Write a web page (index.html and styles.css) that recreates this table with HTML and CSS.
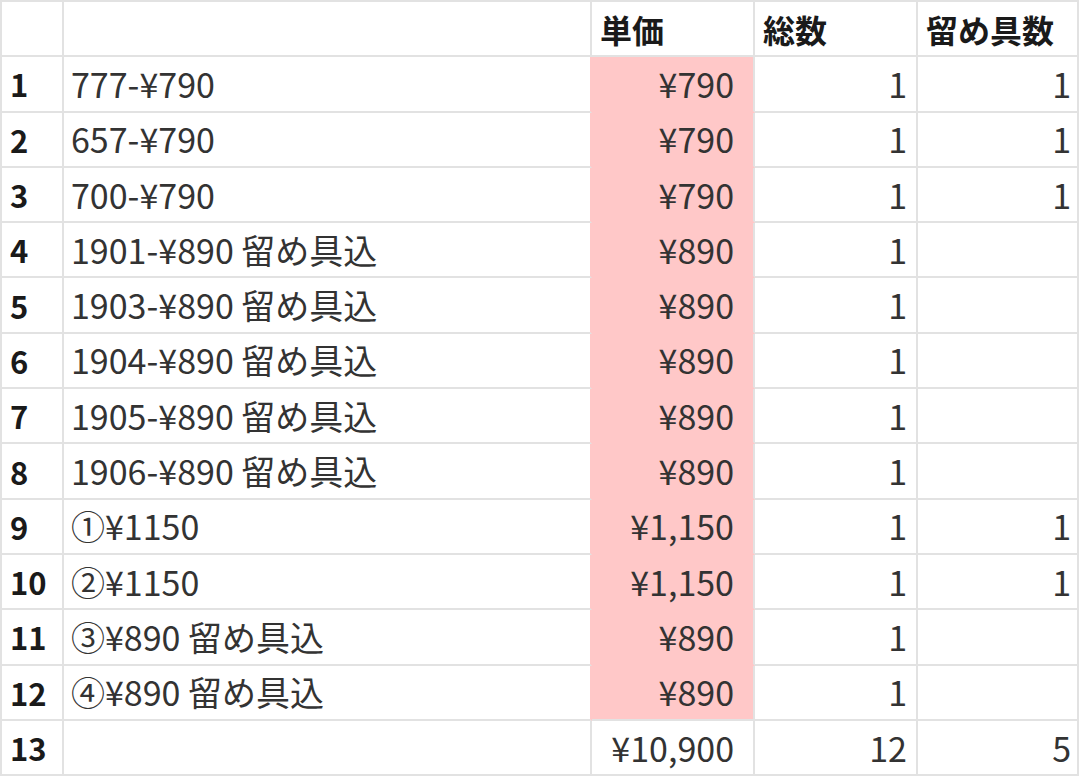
FILE: index.html
```html
<!DOCTYPE html>
<html lang="ja">
<head>
<meta charset="utf-8">
<title>留め具数</title>
<link rel="stylesheet" href="styles.css">
</head>
<body>
<div class="sheet">
  <div class="cell rn"></div><div class="cell txt"></div><div class="cell hd">単価</div><div class="cell hd">総数</div><div class="cell hd">留め具数</div>

  <div class="cell rn">1</div><div class="cell txt pb">777-¥790</div><div class="cell num c pink">¥790</div><div class="cell num d">1</div><div class="cell num e">1</div>
  <div class="cell rn">2</div><div class="cell txt pb">657-¥790</div><div class="cell num c pink">¥790</div><div class="cell num d">1</div><div class="cell num e">1</div>
  <div class="cell rn">3</div><div class="cell txt pb">700-¥790</div><div class="cell num c pink">¥790</div><div class="cell num d">1</div><div class="cell num e">1</div>
  <div class="cell rn">4</div><div class="cell txt pb">1901-¥890 留め具込</div><div class="cell num c pink">¥890</div><div class="cell num d">1</div><div class="cell num e"></div>
  <div class="cell rn">5</div><div class="cell txt pb">1903-¥890 留め具込</div><div class="cell num c pink">¥890</div><div class="cell num d">1</div><div class="cell num e"></div>
  <div class="cell rn">6</div><div class="cell txt pb">1904-¥890 留め具込</div><div class="cell num c pink">¥890</div><div class="cell num d">1</div><div class="cell num e"></div>
  <div class="cell rn">7</div><div class="cell txt pb">1905-¥890 留め具込</div><div class="cell num c pink">¥890</div><div class="cell num d">1</div><div class="cell num e"></div>
  <div class="cell rn">8</div><div class="cell txt pb">1906-¥890 留め具込</div><div class="cell num c pink">¥890</div><div class="cell num d">1</div><div class="cell num e"></div>
  <div class="cell rn">9</div><div class="cell txt pb"><span class="circ">①</span>¥1150</div><div class="cell num c pink">¥1,150</div><div class="cell num d">1</div><div class="cell num e">1</div>
  <div class="cell rn">10</div><div class="cell txt pb"><span class="circ">②</span>¥1150</div><div class="cell num c pink">¥1,150</div><div class="cell num d">1</div><div class="cell num e">1</div>
  <div class="cell rn">11</div><div class="cell txt pb"><span class="circ">③</span>¥890 留め具込</div><div class="cell num c pink">¥890</div><div class="cell num d">1</div><div class="cell num e"></div>
  <div class="cell rn">12</div><div class="cell txt pb"><span class="circ">④</span>¥890 留め具込</div><div class="cell num c pink last">¥890</div><div class="cell num d">1</div><div class="cell num e"></div>

  <div class="cell rn">13</div><div class="cell txt"></div><div class="cell num c">¥10,900</div><div class="cell num d">12</div><div class="cell num e">5</div>
</div>
</body>
</html>
```

FILE: styles.css
```css
html, body {
  margin: 0;
  padding: 0;
  background: #ffffff;
}

body {
  font-family: "Noto Sans CJK JP", "Noto Sans", sans-serif;
  color: #333333;
}

.sheet {
  display: grid;
  grid-template-columns: 62px 528px 163px 163px 161px;
  grid-template-rows: repeat(14, 55.3px);
  border-top: 2px solid #e2e2e2;
  border-left: 2px solid #e2e2e2;
  width: 1077px;
  box-sizing: content-box;
}

.cell {
  box-sizing: border-box;
  border-right: 2px solid #e2e2e2;
  border-bottom: 2px solid #e2e2e2;
  display: flex;
  align-items: center;
  font-size: 34px;
  line-height: 1;
  white-space: nowrap;
  overflow: hidden;
}

.rn {
  font-size: 31px;
  font-weight: 700;
  color: #1a1a1a;
  padding-left: 8px;
}

.hd {
  font-size: 32px;
  font-weight: 700;
  color: #1a1a1a;
  padding-left: 8px;
}

.txt {
  padding-left: 7px;
}

.txt.pb {
  border-right-color: #ffc8c8;
}

.circ {
  display: inline-block;
}

.num {
  justify-content: flex-end;
}

.num.c {
  padding-right: 19px;
}

.num.d {
  padding-right: 9px;
}

.num.e {
  padding-right: 6px;
}

.pink {
  background: #ffc8c8;
  border-bottom-color: #ffc8c8;
}

.pink.last {
  border-bottom-color: #e2e2e2;
}
```
